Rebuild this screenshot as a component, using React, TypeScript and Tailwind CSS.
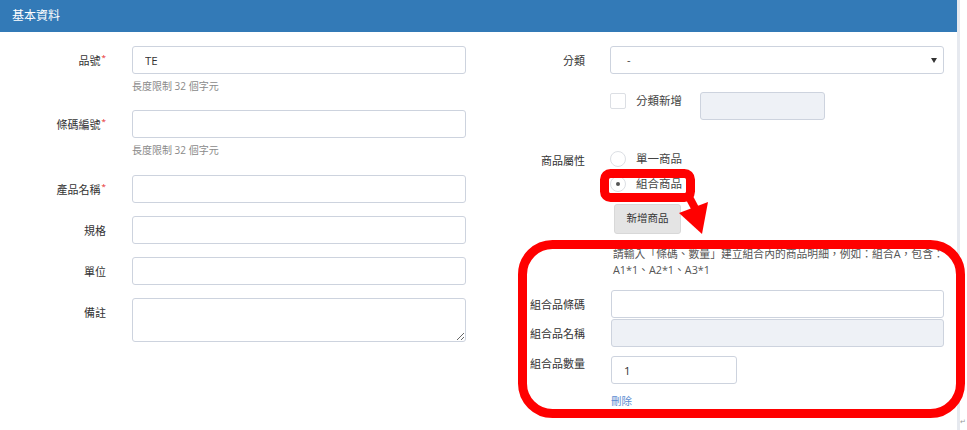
import React from 'react';

const inputCls =
  'block w-full h-[28px] rounded-[3px] border border-[#cdd3de] bg-white px-[12px] text-[11.5px] text-[#333] outline-none';

function Label({ text, required, width = 'w-[106px]', pt = 'pt-[8px]' }: { text: string; required?: boolean; width?: string; pt?: string }) {
  return (
    <div className={`${width} ${pt} shrink-0 text-right text-[11px] leading-[14px] text-[#333]`}>
      {text}
      {required && <span className="relative -top-[5px] ml-[1px] text-[8px] text-[#e5252a]">*</span>}
    </div>
  );
}

function Help() {
  return <div className="mt-[5px] text-[10px] leading-[14px] text-[#8a8a8a]">長度限制 32 個字元</div>;
}

function LeftColumn() {
  return (
    <div className="w-[480px] shrink-0">
      <div className="flex items-start">
        <Label text="品號" required />
        <div className="ml-[26px] w-[334px]">
          <input className={inputCls} defaultValue="TE" readOnly />
          <Help />
        </div>
      </div>
      <div className="mt-[17px] flex items-start">
        <Label text="條碼編號" required />
        <div className="ml-[26px] w-[334px]">
          <input className={inputCls} readOnly />
          <Help />
        </div>
      </div>
      <div className="mt-[18px] flex items-start">
        <Label text="產品名稱" required />
        <div className="ml-[26px] w-[334px]">
          <input className={inputCls} readOnly />
        </div>
      </div>
      <div className="mt-[13px] flex items-start">
        <Label text="規格" />
        <div className="ml-[26px] w-[334px]">
          <input className={inputCls} readOnly />
        </div>
      </div>
      <div className="mt-[13px] flex items-start">
        <Label text="單位" />
        <div className="ml-[26px] w-[334px]">
          <input className={inputCls} readOnly />
        </div>
      </div>
      <div className="mt-[13px] flex items-start">
        <Label text="備註" />
        <div className="ml-[26px] w-[334px]">
          <textarea className="block h-[44px] w-full rounded-[3px] border border-[#cdd3de] bg-white px-[12px] text-[11.5px] outline-none" readOnly />
        </div>
      </div>
    </div>
  );
}

function Radio({ checked, text }: { checked?: boolean; text: string }) {
  return (
    <div className="flex h-[18px] items-center">
      <span className="flex h-[16px] w-[16px] items-center justify-center rounded-full border border-[#dcdfe4] bg-white">
        {checked && <span className="h-[4px] w-[4px] rounded-full bg-[#555]" />}
      </span>
      <span className="ml-[10px] text-[11.5px] leading-[14px] text-[#444]">{text}</span>
    </div>
  );
}

function RightColumn() {
  return (
    <div className="w-[477px] shrink-0">
      {/* 分類 */}
      <div className="flex items-start">
        <Label text="分類" width="w-[105px]" />
        <div className="ml-[25px] flex h-[28px] w-[334px] items-center justify-between rounded-[3px] border border-[#cdd3de] bg-white pl-[16px] pr-[6px] text-[11px] text-[#444]">
          <span>-</span>
          <svg width="6" height="5" viewBox="0 0 6 5">
            <path d="M0 0h6L3 5z" fill="#333" />
          </svg>
        </div>
      </div>

      <div className="mt-[18px] flex items-start pl-[130px]">
        <span className="mt-[1px] h-[16px] w-[16px] shrink-0 rounded-[2px] border border-[#dcdfe4] bg-white" />
        <span className="ml-[10px] mt-[1px] text-[11.5px] leading-[16px] text-[#444]">分類新增</span>
        <div className="ml-[18px] h-[28px] w-[125px] rounded-[3px] border border-[#cdd3de] bg-[#eef1f6]" />
      </div>

      {/* 商品屬性 */}
      <div className="mt-[30px] flex items-start">
        <Label text="商品屬性" width="w-[105px]" pt="pt-[4px]" />
        <div className="ml-[25px]">
          <div className="flex flex-col gap-[7px]">
            <Radio text="單一商品" />
            <Radio text="組合商品" checked />
          </div>
          <button className="ml-[4px] mt-[11px] h-[30px] w-[67px] rounded-[3px] border border-[#d8d8d8] bg-[#e4e4e4] text-[10.5px] text-[#333]">
            新增商品
          </button>
          <div className="ml-[3px] mt-[12px] whitespace-nowrap text-[10.8px] leading-[16px] text-[#555]">
            <div>請輸入「條碼、數量」建立組合內的商品明細，例如：組合A，包含：</div>
            <div>A1*1、A2*1、A3*1</div>
          </div>
        </div>
      </div>

      {/* 組合品 */}
      <div className="mt-[12px] flex items-center">
        <Label text="組合品條碼" width="w-[105px]" pt="pt-[2px]" />
        <div className="ml-[26px] w-[333px]">
          <input className={inputCls} readOnly />
        </div>
      </div>
      <div className="mt-[1px] flex items-center">
        <Label text="組合品名稱" width="w-[105px]" pt="pt-[2px]" />
        <div className="ml-[26px] h-[28px] w-[333px] rounded-[3px] border border-[#cdd3de] bg-[#eef1f6]" />
      </div>
      <div className="mt-[9px] flex items-start">
        <Label text="組合品數量" width="w-[105px]" pt="pt-[1px]" />
        <div className="ml-[26px] w-[126px]">
          <input className={inputCls} defaultValue="1" readOnly />
        </div>
      </div>
      <div className="ml-[131px] mt-[10px] text-[10.5px] leading-[14px] text-[#5b8bd0]">刪除</div>
    </div>
  );
}

export default function App() {
  return (
    <div className="relative h-[430px] w-[967px] overflow-hidden bg-white font-['Open_Sans','Noto_Sans_CJK_TC',sans-serif]">
      <div className="flex h-full">
        <div className="w-[957px] shrink-0">
          <div className="flex h-[32px] items-center bg-[#337ab7] pl-[12px] text-[12px] text-white">基本資料</div>
          <div className="flex pt-[14px]">
            <LeftColumn />
            <RightColumn />
          </div>
        </div>
        <div className="h-full w-[3px] shrink-0 bg-[#e6e9ef]" />
        <div className="flex flex-1 flex-col justify-end pb-[3px] text-[7px] leading-[10px] text-[#999]">↵</div>
      </div>

      {/* annotations */}
      <svg className="pointer-events-none absolute left-0 top-0" width="967" height="430">
        <rect x="604.5" y="173.5" width="86" height="24" rx="6" fill="none" stroke="#ff0000" strokeWidth="9" />
        <line x1="688" y1="195" x2="697" y2="212" stroke="#ff0000" strokeWidth="8" />
        <polygon points="679,213 708,202 702,234" fill="#ff0000" />
        <rect x="522.5" y="244.5" width="438" height="169" rx="30" fill="none" stroke="#ff0000" strokeWidth="9" />
      </svg>
    </div>
  );
}
